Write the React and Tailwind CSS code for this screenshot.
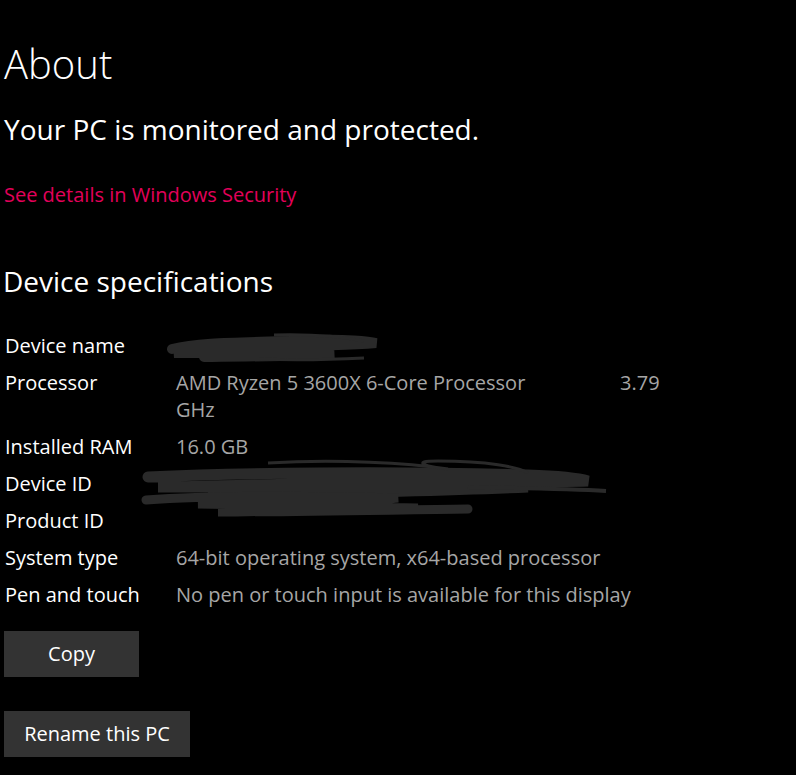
import React from "react";

const rows = [
  ["Device name", null, "name"],
  ["Processor", "proc"],
  ["Installed RAM", "16.0 GB"],
  ["Device ID", null, "devid"],
  ["Product ID", null, "prodid"],
  ["System type", "64-bit operating system, x64-based processor"],
  ["Pen and touch", "No pen or touch input is available for this display"],
];

function Scribble({ kind }) {
  if (kind === "name")
    return (
      <svg className="absolute left-[-12px] top-[4px]" width="220" height="32" viewBox="0 0 220 32">
        <path d="M8 18 C40 10 90 12 150 9 C180 8 205 10 212 12 C190 14 140 15 100 15 C70 16 40 18 10 22 C50 22 120 20 170 22 C140 26 90 25 40 26" stroke="#2a2a2a" strokeWidth="10" fill="none" strokeLinecap="round" />
        <path d="M110 4 C150 3 180 6 200 10" stroke="#2a2a2a" strokeWidth="3" fill="none" />
        <path d="M95 28 C140 30 180 28 200 27" stroke="#2a2a2a" strokeWidth="3" fill="none" />
      </svg>
    );
  if (kind === "devid")
    return (
      <svg className="absolute left-[-38px] top-[-8px]" width="475" height="52" viewBox="0 0 475 52">
        <path d="M10 20 C100 16 250 14 390 18 C420 19 440 21 450 24 C380 26 250 24 120 28 C80 29 40 30 20 30 C100 30 250 28 390 30 C300 34 200 36 70 38 C150 38 220 40 200 42" stroke="#2a2a2a" strokeWidth="11" fill="none" strokeLinecap="round" />
        <path d="M130 6 C200 2 270 6 310 12 C290 10 270 4 300 4 C350 4 380 10 390 16" stroke="#2a2a2a" strokeWidth="3" fill="none" />
        <path d="M330 30 C380 31 430 32 468 34" stroke="#2a2a2a" strokeWidth="4" fill="none" />
      </svg>
    );
  if (kind === "prodid")
    return (
      <svg className="absolute left-[-38px] top-[-12px]" width="340" height="32" viewBox="0 0 340 32">
        <path d="M8 10 C60 6 150 5 260 8 C230 12 150 12 60 14 C120 15 200 16 280 18 C220 20 150 21 80 22 C150 22 250 20 330 19" stroke="#2a2a2a" strokeWidth="9" fill="none" strokeLinecap="round" />
      </svg>
    );
  return null;
}

export default function App() {
  return (
    <div
      className="min-h-[775px] w-[796px] bg-black text-white overflow-hidden"
      style={{ fontFamily: "'Open Sans', 'Noto Sans', sans-serif" }}
    >
      <div className="pl-[4px] pt-[36px]">
        <h1 className="text-[40px] font-light leading-[56px]">About</h1>
        <p className="mt-[17px] text-[28px] leading-[40px]">Your PC is monitored and protected.</p>
        <p className="mt-[33px] text-[20px] leading-[26px] text-[#e3005a]">See details in Windows Security</p>
        <h2 className="mt-[55px] text-[28px] leading-[36px] ml-[-1px]">Device specifications</h2>
        <div className="mt-[28px] flex flex-col">
          {rows.map(([label, value, scr]) => (
            <div key={label} className="flex text-[20px]">
              <div className="w-[172px] shrink-0 pl-[1px] leading-[37px]">{label}</div>
              <div className="relative flex-1 text-[#a6a6a6]">
                {value === "proc" ? (
                  <div className="pt-[5px] pb-[5px] leading-[27px]">
                    <div className="flex">
                      <span className="w-[444px]">AMD Ryzen 5 3600X 6-Core Processor</span>
                      <span>3.79</span>
                    </div>
                    <div>GHz</div>
                  </div>
                ) : (
                  <div className="leading-[37px] h-[37px]">{value}</div>
                )}
                {scr && <Scribble kind={scr} />}
              </div>
            </div>
          ))}
        </div>
        <button className="mt-[18px] block h-[46px] w-[135px] bg-[#333333] text-[20px] text-white">Copy</button>
        <button className="mt-[34px] block h-[46px] w-[186px] bg-[#333333] text-[20px] text-white">Rename this PC</button>
      </div>
    </div>
  );
}
